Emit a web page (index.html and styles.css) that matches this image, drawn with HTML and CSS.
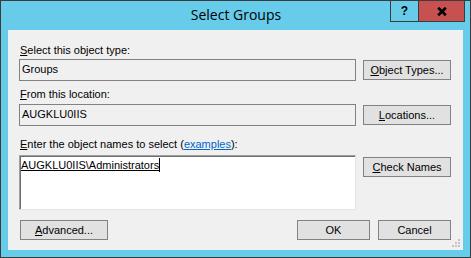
FILE: index.html
```html
<!DOCTYPE html>
<html>
<head>
<meta charset="utf-8">
<title>Select Groups</title>
<link rel="stylesheet" href="styles.css">
</head>
<body>
<div class="window">
  <div class="titlebar">
    <span class="title">Select Groups</span>
    <div class="caption-buttons">
      <div class="cap help">?</div>
      <div class="cap close">
        <svg width="10" height="9" viewBox="0 0 10 9"><path d="M1.2 0.8 L8.8 8.2 M8.8 0.8 L1.2 8.2" stroke="#000" stroke-width="2.7" fill="none"/></svg>
      </div>
    </div>
  </div>
  <div class="client">
    <div class="section s1">
      <div class="label"><u>S</u>elect this object type:</div>
      <div class="input">Groups</div>
      <button class="btn side"><u>O</u>bject Types...</button>
    </div>
    <div class="section s2">
      <div class="label"><u>F</u>rom this location:</div>
      <div class="input">AUGKLU0IIS</div>
      <button class="btn side"><u>L</u>ocations...</button>
    </div>
    <div class="section s3">
      <div class="label"><u>E</u>nter the object names to select (<a class="link" href="#">examples</a>):</div>
      <div class="names"><span class="resolved">AUGKLU0IIS\Administrators</span><span class="caret"></span></div>
      <button class="btn side check"><u>C</u>heck Names</button>
    </div>
    <div class="bottom">
      <button class="btn wide"><u>A</u>dvanced...</button>
      <button class="btn ok">OK</button>
      <button class="btn cancel">Cancel</button>
    </div>
    <svg class="grip" width="9" height="9" viewBox="0 0 9 9">
      <rect x="6" y="0" width="2" height="2" fill="#c4c4c4"/>
      <rect x="3" y="3" width="2" height="2" fill="#c4c4c4"/>
      <rect x="6" y="3" width="2" height="2" fill="#c4c4c4"/>
      <rect x="0" y="6" width="2" height="2" fill="#c4c4c4"/>
      <rect x="3" y="6" width="2" height="2" fill="#c4c4c4"/>
      <rect x="6" y="6" width="2" height="2" fill="#c4c4c4"/>
    </svg>
  </div>
</div>
</body>
</html>
```
FILE: styles.css
```css
* { box-sizing: border-box; margin: 0; padding: 0; }
html, body { margin: 0; width: 471px; height: 258px; overflow: hidden; background: #67ccea; }
body { font-family: "Liberation Sans", Arial, sans-serif; font-size: 11px; color: #000; }

.window {
  width: 471px;
  height: 258px;
  border: 1px solid #3c3c3c;
  background: #67ccea;
  padding: 0 7px 7px 7px;
  display: flex;
  flex-direction: column;
}

.titlebar {
  height: 29px;
  position: relative;
  display: flex;
  justify-content: center;
  align-items: center;
}
.title {
  font-family: "Open Sans", "Noto Sans", sans-serif;
  font-size: 14px;
  line-height: 20px;
  margin-top: -1px;
  margin-left: 1px;
}
.caption-buttons {
  position: absolute;
  top: -1px;
  right: -2px;
  display: flex;
}
.cap {
  height: 22px;
  border: 1px solid #3c3c3c;
  display: flex;
  align-items: center;
  justify-content: center;
}
.help {
  width: 29px;
  font-weight: bold;
  font-size: 12px;
  font-family: "Liberation Sans", Arial, sans-serif;
}
.close {
  width: 47px;
  margin-left: -1px;
  background: #c75050;
}

.client {
  height: 220px;
  background: #f0f0f0;
  padding: 14px 12px 0 11px;
  position: relative;
}

.section {
  display: grid;
  grid-template-columns: 337px 88px;
  column-gap: 7px;
}
.label {
  grid-column: 1 / 3;
  height: 13px;
  line-height: 13px;
  padding-left: 1px;
  white-space: nowrap;
}
.s1 .label { margin-bottom: 2px; }
.s2 { margin-top: 7px; }
.s2 .label { margin-bottom: 3px; }
.s3 { margin-top: 12px; }
.s3 .label { margin-bottom: 4px; }

.link { color: #0066cc; text-decoration: underline; }

.input {
  height: 22px;
  border: 1px solid #828282;
  padding-left: 2px;
  line-height: 19px;
  background: #f0f0f0;
}

.names {
  height: 55px;
  background: #fff;
  border: 1px solid;
  border-color: #a0a0a0 #e3e3e3 #e3e3e3 #a0a0a0;
  box-shadow: inset 1px 1px 0 #6f6f6f;
  padding: 2px 0 0 1px;
  line-height: 13px;
  white-space: nowrap;
}
.resolved { text-decoration: underline; }
.caret {
  display: inline-block;
  width: 1px;
  height: 14px;
  background: #000;
  vertical-align: -3px;
}

.btn {
  height: 20px;
  background: #e1e1e1;
  border: 1px solid #828282;
  font-family: "Liberation Sans", Arial, sans-serif;
  font-size: 11px;
  color: #000;
  line-height: 17px;
  padding: 0;
  text-align: center;
}
.side { align-self: center; }
.check { align-self: start; margin-top: 2px; }

.bottom {
  display: flex;
  margin-top: 10px;
  padding-left: 1px;
}
.wide { width: 88px; }
.ok { width: 73px; margin-left: auto; }
.cancel { width: 73px; margin-left: 8px; }

.grip {
  position: absolute;
  right: 2px;
  bottom: 2px;
}
```
